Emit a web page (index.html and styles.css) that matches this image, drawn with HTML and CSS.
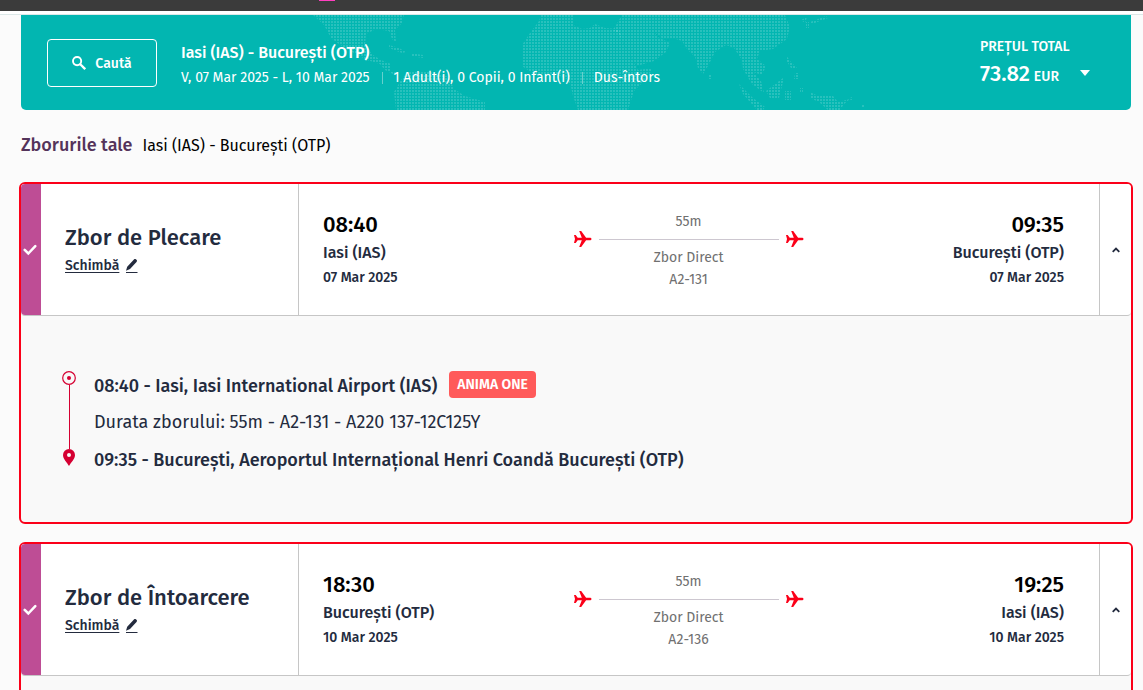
FILE: index.html
```html
<!DOCTYPE html>
<html lang="ro">
<head>
<meta charset="utf-8">
<meta name="viewport" content="width=device-width, initial-scale=1">
<title>Zborurile tale</title>
<link rel="stylesheet" href="styles.css">
</head>
<body>
<svg class="sprite" aria-hidden="true">
  <symbol id="plane" viewBox="0 0 18 16"><path d="M0 4h1.700l2 2.800h4.100L5.200 0h2l4.900 6.800h4.100a1.250 1.250 0 0 1 0 2.500h-4.100L7.200 16h-2l2.600-6.700H3.700L1.700 12H0l1-4z"/></symbol>
  <symbol id="tick" viewBox="0 0 14 12"><path d="M1.700 5.900l3.600 3.600 7-7.400" fill="none" stroke="currentColor" stroke-width="2.500" stroke-linecap="round"/></symbol>
  <symbol id="pen" viewBox="0 0 12 14"><path d="M0 11.800l1.200-4L7.700.700a1.600 1.600 0 0 1 2.800 2.300L4 9.900zM0 12.900h11.500V14H0z"/></symbol>
  <symbol id="up" viewBox="0 0 10 8"><path d="M1.700 5.800L5 2.500l3.300 3.300" fill="none" stroke="currentColor" stroke-width="1.800"/></symbol>
</svg>
<header class="topbar"><span class="topbar-mark"></span></header>
<main class="page">
  <section class="summary">
    <svg class="map" viewBox="300 15 600 95" aria-hidden="true">
      <defs><pattern id="dots" width="3" height="3" patternUnits="userSpaceOnUse"><rect width="2" height="2" fill="#fff" fill-opacity=".15"/></pattern></defs>
      <g fill="url(#dots)">
        <path d="M315 15h91l-2 8-7 7 1 12-4-3-3-8-13-2-10 5-1 12 8 9 8 5 10 4v7l7 2-3 2-10-5-5-6-13-4-15-8-9-5-12-9-7-13z"/>
        <path d="M391 45l10 3 7 4-4 1-13-5zM413 53l12 2v3l-11-2zM403 80l8-9h18l22 6 5 12 11 7 20 6v8h-89l-2-18z"/>
        <path d="M543 15h32v10l9 4 8-1 5-4 10 4 14 1 4 14 9 16 6 11 14-2-3 8-15 15-6 19h-50l-5-14-2-9-4-8-12-5-20 1-13-9V45l8-12 9-12z"/>
        <path d="M624 15h163l5 12-3 12-14 10-13 2-3 8 9 7-4 9-9-3 8 9 3 12-12-9-9-15-1-9-8-12-8-3-11 7-7 14-5 8-5-6-3-11-8-8-5-8-9-3-10 1-9-7 4 5 12 6-4 9-12 9-17 5-9-14-9-18-6-4z"/>
        <path d="M710 75h4v4h-4zM788 55l4 6 7 7h-6l-5-8zM797 73h3v6h-4zM768 91l17-13v4l-4 16h-9zM787 91h6v9h-6zM802 88h3v4h-3zM812 92l8 4 15 0 5 6 12-3-6 5-4 6h-12l-9-8-9-4zM850 99l4-2v3zM863 105h3v3h-3zM803 20l6-3-2 6zM812 22l16-6 2 2-16 6zM808 22h3v6h-3zM741 84l14 14 12 9-2 3h-6l-14-16z"/>
      </g>
    </svg>
    <button class="search" type="button">
      <svg class="search-icon" viewBox="0 0 14 14" aria-hidden="true"><circle cx="5.100" cy="5.100" r="4.100" fill="none" stroke="currentColor" stroke-width="1.900"/><path d="M8 8l5.200 5.200" stroke="currentColor" stroke-width="2.300"/></svg>
      Caută
    </button>
    <div class="trip">
      <h1 class="trip-route">Iasi (IAS) - București (OTP)</h1>
      <ul class="trip-facts"><li>V, 07 Mar 2025 - L, 10 Mar 2025</li><li>1 Adult(i), 0 Copii, 0 Infant(i)</li><li>Dus-întors</li></ul>
    </div>
    <button class="total" type="button">
      <span class="total-label">PREȚUL TOTAL</span>
      <span class="total-line"><span class="total-value">73.82</span><span class="total-currency">EUR</span><span class="caret"></span></span>
    </button>
  </section>

  <div class="heading"><h2 class="heading-title">Zborurile tale</h2><span class="heading-route">Iasi (IAS) - București (OTP)</span></div>

  <article class="card">
    <div class="card-row">
      <div class="status"><svg class="tick"><use href="#tick"/></svg></div>
      <div class="kind"><h3 class="kind-title">Zbor de Plecare</h3><a class="change" href="#"><span class="change-text">Schimbă</span><svg class="pen"><use href="#pen"/></svg></a></div>
      <div class="flight">
        <div class="stop"><span class="time">08:40</span><span class="place">Iasi (IAS)</span><span class="date">07 Mar 2025</span></div>
        <div class="leg">
          <span class="leg-time">55m</span>
          <div class="leg-path"><svg class="plane"><use href="#plane"/></svg><span class="leg-line"></span><svg class="plane"><use href="#plane"/></svg></div>
          <span>Zbor Direct</span><span>A2-131</span>
        </div>
        <div class="stop stop-end"><span class="time">09:35</span><span class="place">București (OTP)</span><span class="date">07 Mar 2025</span></div>
      </div>
      <button class="toggle" type="button" aria-label="Ascunde detaliile"><svg class="up"><use href="#up"/></svg></button>
    </div>
    <div class="details">
      <div class="rail" aria-hidden="true">
        <svg class="origin" viewBox="0 0 14 14"><circle cx="7" cy="7" r="6.300" fill="none" stroke="#d50032" stroke-width="1.200"/><circle cx="7" cy="7" r="2" fill="#d50032"/></svg>
        <span class="rail-line"></span>
        <svg class="pin" viewBox="0 0 12 17"><path fill="#d50032" fill-rule="evenodd" d="M6 0a6 6 0 0 1 6 6c0 4-4 7.500-6 11C4 13.500 0 10 0 6a6 6 0 0 1 6-6zm0 4a2 2 0 1 0 0 4 2 2 0 0 0 0-4z"/></svg>
      </div>
      <div class="steps">
        <p class="step"><strong class="step-name">08:40 - Iasi, Iasi International Airport (IAS)</strong><span class="badge">ANIMA ONE</span></p>
        <p class="step step-info">Durata zborului: 55m - A2-131 - A220 137-12C125Y</p>
        <p class="step"><strong class="step-name">09:35 - București, Aeroportul Internațional Henri Coandă București (OTP)</strong></p>
      </div>
    </div>
  </article>

  <article class="card">
    <div class="card-row">
      <div class="status"><svg class="tick"><use href="#tick"/></svg></div>
      <div class="kind"><h3 class="kind-title">Zbor de Întoarcere</h3><a class="change" href="#"><span class="change-text">Schimbă</span><svg class="pen"><use href="#pen"/></svg></a></div>
      <div class="flight">
        <div class="stop"><span class="time">18:30</span><span class="place">București (OTP)</span><span class="date">10 Mar 2025</span></div>
        <div class="leg">
          <span class="leg-time">55m</span>
          <div class="leg-path"><svg class="plane"><use href="#plane"/></svg><span class="leg-line"></span><svg class="plane"><use href="#plane"/></svg></div>
          <span>Zbor Direct</span><span>A2-136</span>
        </div>
        <div class="stop stop-end"><span class="time">19:25</span><span class="place">Iasi (IAS)</span><span class="date">10 Mar 2025</span></div>
      </div>
      <button class="toggle" type="button" aria-label="Ascunde detaliile"><svg class="up"><use href="#up"/></svg></button>
    </div>
    <div class="details"></div>
  </article>
</main>
</body>
</html>
```
FILE: styles.css
```css
* { box-sizing: border-box; }
body {
  margin: 0;
  height: 100vh;
  overflow: hidden;
  background: #fbfbfb;
  color: #232b3e;
  font-family: "Fira Sans", Roboto, "Noto Sans", sans-serif;
  font-size: 16px;
}
h1, h2, h3, p, ul { margin: 0; padding: 0; }
button { font: inherit; color: inherit; background: none; border: 0; padding: 0; cursor: pointer; }
svg { display: block; flex: none; fill: currentColor; }
.sprite { position: absolute; width: 0; height: 0; }

.topbar {
  height: 15px;
  background: linear-gradient(#3b3b3b 11px, #fff 11px);
  border-bottom: 1px solid #dce8e8;
}
.topbar-mark { display: block; width: 16px; height: 1px; margin-left: 319px; background: #ff3fc0; }
.page { padding: 0 10px 0 19px; }

.summary {
  position: relative;
  display: flex;
  align-items: center;
  margin: 0 2px;
  padding: 20px 41px 19px 26px;
  border-radius: 0 0 5px 5px;
  background: #02b6b1;
  color: #fff;
  overflow: hidden;
}
.map { position: absolute; top: 0; left: 277px; width: 600px; height: 95px; }
.search {
  position: relative;
  display: flex;
  align-items: center;
  justify-content: center;
  gap: 9px;
  width: 110px;
  height: 48px;
  border: 1px solid #fff;
  border-radius: 4px;
  font-size: 14px;
  font-weight: 500;
}
.search-icon { width: 14px; height: 14px; }
.trip { position: relative; flex: 1; margin-left: 24px; padding-top: 4px; }
.trip-route { font-size: 16px; font-weight: 500; line-height: 26px; }
.trip-facts { display: flex; list-style: none; font-size: 14px; line-height: 24px; }
.trip-facts li { display: flex; align-items: center; }
.trip-facts li + li::before {
  content: "";
  width: 1px;
  height: 12px;
  margin: 0 11px 0 12px;
  background: #66d0cd;
}
.total { position: relative; text-align: left; }
.total-label { display: block; font-size: 14px; font-weight: 500; line-height: 24px; }
.total-line { display: flex; align-items: baseline; gap: 4px; line-height: 29px; }
.total-value { font-size: 22px; font-weight: 500; }
.total-currency { font-size: 14px; font-weight: 500; }
.caret {
  align-self: center;
  margin: 0 0 4px 17px;
  border: 5px solid transparent;
  border-top: 6px solid #fff;
  border-bottom: 0;
}

.heading { display: flex; align-items: baseline; gap: 10px; padding: 21px 2px 22px; line-height: 28px; }
.heading-title { color: #54335a; font-size: 18px; font-weight: 500; }
.heading-route { color: #000; font-size: 16px; }

.card {
  margin-bottom: 18px;
  border: 2px solid #fb0019;
  border-radius: 6px;
  background: #f9f9f9;
}
.card-row {
  display: flex;
  min-height: 132px;
  border-bottom: 1px solid #c6c6c6;
  border-radius: 4px;
  background: #fff;
}
.status {
  display: flex;
  align-items: center;
  justify-content: center;
  width: 20px;
  padding-right: 2px;
  border-radius: 4px 0 0 4px;
  background: #be4d95;
  color: #fff;
}
.tick { width: 14px; height: 12px; }
.kind {
  display: flex;
  flex-direction: column;
  justify-content: center;
  width: 258px;
  padding: 0 24px;
  border-right: 1px solid #c6c6c6;
}
.kind-title { font-size: 22px; font-weight: 500; line-height: 32px; white-space: nowrap; }
.change { display: flex; align-items: center; gap: 7px; color: inherit; font-size: 14px; font-weight: 500; line-height: 24px; text-decoration: none; }
.change-text { text-decoration: underline; text-underline-offset: 2px; }
.pen { width: 12px; height: 14px; }
.flight {
  display: grid;
  grid-template-columns: 1fr auto 1fr;
  align-items: center;
  flex: 1;
  padding: 0 35px 0 24px;
}
.stop { display: flex; flex-direction: column; font-weight: 500; }
.stop-end { align-items: flex-end; }
.time { color: #000; font-size: 22px; line-height: 28px; }
.place { font-size: 16px; line-height: 28px; }
.date { font-size: 14px; line-height: 22px; }
.leg { display: flex; flex-direction: column; align-items: center; margin-right: 10px; padding-top: 5px; color: #707070; font-size: 14px; line-height: 22px; }
.leg-time { line-height: 18px; }
.leg-path { display: flex; align-items: center; gap: 7px; color: #fb0019; }
.plane { width: 18px; height: 16px; }
.leg-line { width: 180px; height: 1px; background: #cdc7d0; }
.toggle {
  display: flex;
  align-items: center;
  justify-content: center;
  width: 32px;
  border-left: 1px solid #c6c6c6;
}
.up { width: 10px; height: 8px; }

.details { display: flex; gap: 18px; min-height: 206px; padding: 50px 41px 44px; }
.rail { display: flex; flex-direction: column; align-items: center; padding-top: 5px; }
.origin { width: 14px; height: 14px; }
.rail-line { width: 1px; height: 64px; background: #d50032; }
.pin { width: 12px; height: 17px; }
.steps { display: flex; flex-direction: column; padding-top: 2px; font-size: 18px; line-height: 36px; }
.step { display: flex; align-items: center; gap: 12px; height: 36px; }
.step-name { font-weight: 500; }
.step-info { height: 38px; padding-bottom: 3px; }
.badge {
  margin-bottom: 4px;
  padding: 0 8px;
  border-radius: 4px;
  background: #ff5a5a;
  color: #fff;
  font-size: 14px;
  font-weight: 600;
  line-height: 27px;
}
```
